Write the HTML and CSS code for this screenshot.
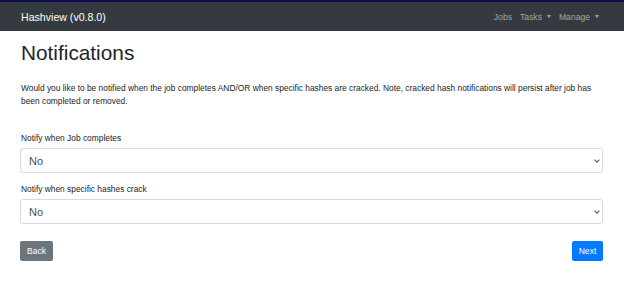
FILE: index.html
```html
<!DOCTYPE html>
<html lang="en">
<head>
    <meta charset="UTF-8">
    <meta name="viewport" content="width=device-width, initial-scale=1.0">
    <title>Hashview - Notifications</title>
    <link rel="stylesheet" href="styles.css">
</head>
<body>
    <nav class="navbar">
        <a class="brand" href="#">Hashview (v0.8.0)</a>
        <ul class="nav-links">
            <li><a href="#">Jobs</a></li>
            <li><a href="#" class="dropdown">Tasks</a></li>
            <li><a href="#" class="dropdown">Manage</a></li>
        </ul>
    </nav>

    <main class="container">
        <h1>Notifications</h1>
        <p class="intro">Would you like to be notified when the job completes AND/OR when specific hashes are cracked. Note, cracked hash notifications will persist after job has been completed or removed.</p>

        <form class="notify-form">
            <div class="form-group">
                <label for="notify-job">Notify when Job completes</label>
                <div class="select-wrap">
                    <select id="notify-job" class="form-control">
                        <option>No</option>
                        <option>Yes</option>
                    </select>
                </div>
            </div>
            <div class="form-group">
                <label for="notify-hashes">Notify when specific hashes crack</label>
                <div class="select-wrap">
                    <select id="notify-hashes" class="form-control">
                        <option>No</option>
                        <option>Yes</option>
                    </select>
                </div>
            </div>
            <div class="actions">
                <button type="button" class="btn btn-secondary">Back</button>
                <button type="submit" class="btn btn-primary">Next</button>
            </div>
        </form>
    </main>
</body>
</html>
```

FILE: styles.css
```css
* {
    box-sizing: border-box;
}

body {
    margin: 0;
    font-family: "Liberation Sans", Arial, sans-serif;
    font-size: 8.4px;
    color: #212529;
    background-color: #fff;
}

.navbar {
    display: flex;
    align-items: center;
    justify-content: space-between;
    height: 31px;
    padding: 0 20px 0 21px;
    background-color: #343a40;
    border-top: 2px solid #0c0c52;
}

.brand {
    color: #fff;
    font-size: 10.6px;
    text-decoration: none;
}

.nav-links {
    display: flex;
    gap: 8px;
    list-style: none;
    margin: 0;
    padding: 0 5px 0 0;
}

.nav-links a {
    color: rgba(255, 255, 255, 0.55);
    font-size: 8.6px;
    text-decoration: none;
}

.dropdown::after {
    content: '';
    display: inline-block;
    margin-left: 5px;
    vertical-align: 2px;
    border-top: 3px solid;
    border-left: 2.5px solid transparent;
    border-right: 2.5px solid transparent;
}

.container {
    padding: 0 21px 0 20px;
}

h1 {
    margin: 7px 0 0 1px;
    font-size: 20.8px;
    font-weight: 400;
    line-height: 29px;
}

.intro {
    margin: 15px 0 0 1px;
    line-height: 12.5px;
}

.notify-form {
    margin-top: 24px;
}

.form-group {
    margin-bottom: 9px;
}

.form-group label {
    display: block;
    margin: 0 0 3px 1px;
    line-height: 14px;
}

.select-wrap {
    position: relative;
}

.select-wrap::after {
    content: '';
    position: absolute;
    right: 4px;
    top: 10px;
    width: 3px;
    height: 3px;
    border-right: 1px solid #555;
    border-bottom: 1px solid #555;
    transform: rotate(45deg);
    pointer-events: none;
}

.form-control {
    display: block;
    width: 100%;
    height: 25px;
    padding: 0 8px;
    font-family: inherit;
    font-size: 11px;
    color: #495057;
    background-color: #fff;
    border: 1px solid #d6dbe0;
    border-radius: 3px;
    appearance: none;
    -webkit-appearance: none;
}

.actions {
    display: flex;
    justify-content: space-between;
    margin-top: 17px;
}

.btn {
    height: 20px;
    padding: 0 6px;
    font-family: inherit;
    font-size: 8.6px;
    color: #fff;
    border: none;
    border-radius: 2px;
    cursor: pointer;
}

.btn-secondary {
    width: 33px;
    background-color: #6c757d;
}

.btn-primary {
    width: 31px;
    background-color: #007bff;
}
```
